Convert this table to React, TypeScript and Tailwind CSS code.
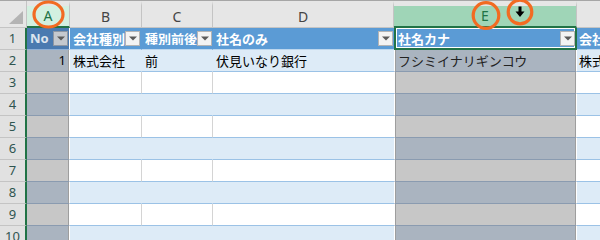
import React from "react";

const Drop = ({ dark = false }: { dark?: boolean }) => (
  <div
    className={
      "ml-auto w-[15px] h-[15px] shrink-0 border flex items-center justify-center " +
      (dark ? "bg-[#c4c8ce] border-[#8d96a3]" : "bg-[#f3f3f3] border-[#b4b4b4]")
    }
  >
    <svg width="8" height="5" viewBox="0 0 8 5">
      <path d="M0 0.5H8L4 4.5Z" fill="#5a5a5a" />
    </svg>
  </div>
);

type RowKind = "white" | "blue";

const rowData: { n: number; kind: RowKind }[] = [
  { n: 3, kind: "white" },
  { n: 4, kind: "blue" },
  { n: 5, kind: "white" },
  { n: 6, kind: "blue" },
  { n: 7, kind: "white" },
  { n: 8, kind: "blue" },
  { n: 9, kind: "white" },
  { n: 10, kind: "blue" },
];

const RowHeader = ({ n }: { n: number }) => (
  <div className="w-[27px] h-[22px] shrink-0 bg-[#e1e1e1] border-b border-b-[#c4c4c4] border-r-2 border-r-[#217346] flex items-center justify-center text-[13px] font-normal text-[#2f5550] leading-none font-['Noto_Sans',sans-serif]">
    {n}
  </div>
);

const DataRow = ({
  n,
  kind,
  b = "",
  c = "",
  d = "",
  e = "",
  f = "",
  a = "",
}: {
  n: number;
  kind: RowKind;
  a?: string;
  b?: string;
  c?: string;
  d?: string;
  e?: string;
  f?: string;
}) => {
  const blue = kind === "blue";
  const bg = blue ? "bg-[#ddebf7]" : "bg-white";
  const vline = blue ? "border-r-transparent" : "border-r-[#d4d4d4]";
  const sel = blue ? "bg-[#aab4c0]" : "bg-[#c7c7c7]";
  return (
    <div className="flex h-[22px] text-[13px] text-black leading-none">
      <RowHeader n={n} />
      <div
        className={
          "w-[43px] shrink-0 border-b border-b-[#8a9bb0] border-r border-r-white shadow-[inset_-1px_0_0_#9e9e9e] flex items-center justify-end pr-[3px] font-['Noto_Sans',sans-serif] " +
          sel
        }
      >
        {a}
      </div>
      <div className={"w-[72px] shrink-0 border-b border-b-[#9bc2e6] border-r flex items-center pl-[3px] whitespace-nowrap overflow-hidden " + bg + " " + vline}>
        {b}
      </div>
      <div className={"w-[71px] shrink-0 border-b border-b-[#9bc2e6] border-r flex items-center pl-[3px] whitespace-nowrap overflow-hidden " + bg + " " + vline}>
        {c}
      </div>
      <div className={"w-[181px] shrink-0 border-b border-b-[#9bc2e6] flex items-center pl-[3px] whitespace-nowrap overflow-hidden " + bg}>
        {d}
      </div>
      <div
        className={
          "w-[183px] shrink-0 border-b border-b-[#8a9bb0] border-x border-x-white shadow-[inset_1px_0_0_#9e9e9e,inset_-1px_0_0_#9e9e9e] flex items-center pl-[3px] whitespace-nowrap overflow-hidden text-[#222] " +
          sel
        }
      >
        {e}
      </div>
      <div className={"flex-1 border-b border-b-[#9bc2e6] flex items-center pl-[2px] whitespace-nowrap overflow-hidden " + bg}>
        {f}
      </div>
    </div>
  );
};

export default function App() {
  return (
    <div className="relative w-[600px] h-[240px] overflow-hidden bg-white font-['Noto_Sans_CJK_JP',sans-serif]">
      {/* column headers */}
      <div className="flex h-[28px] border-t border-t-[#a6a6a6] text-[14px] leading-none font-['Noto_Sans',sans-serif]">
        <div className="w-[27px] h-[27px] shrink-0 bg-[#e6e6e6] border-r border-r-[#c4c4c4] border-b border-b-[#c4c4c4] flex items-end justify-end pr-[3px] pb-[3px]">
          <svg width="14" height="13" viewBox="0 0 14 13">
            <path d="M14 0V13H0Z" fill="#b4b4b4" />
          </svg>
        </div>
        <div className="w-[43px] h-[27px] shrink-0 bg-[#d3f0e0] border-t-[5px] border-t-[#e6e6e6] border-r border-r-[#c4c4c4] border-b-2 border-b-[#217346] flex items-center justify-center text-[#217346]">
          A
        </div>
        <div className="w-[72px] h-[27px] shrink-0 bg-[#e6e6e6] border-t-[5px] border-t-[#e6e6e6] border-r border-r-[#c4c4c4] border-b border-b-[#c4c4c4] flex items-center justify-center text-[#444]">
          B
        </div>
        <div className="w-[71px] h-[27px] shrink-0 bg-[#e6e6e6] border-t-[5px] border-t-[#e6e6e6] border-r border-r-[#c4c4c4] border-b border-b-[#c4c4c4] flex items-center justify-center text-[#444]">
          C
        </div>
        <div className="w-[181px] h-[27px] shrink-0 bg-[#e6e6e6] border-t-[5px] border-t-[#e6e6e6] border-r border-r-[#c4c4c4] border-b border-b-[#c4c4c4] flex items-center justify-center text-[#444]">
          D
        </div>
        <div className="w-[183px] h-[27px] shrink-0 bg-[#9fd5b7] border-t-[5px] border-t-[#e6e6e6] border-r border-r-[#c4c4c4] border-b-2 border-b-[#217346] flex items-center justify-center text-[#217346]">
          E
        </div>
        <div className="flex-1 h-[27px] bg-[#e6e6e6] border-t-[5px] border-t-[#e6e6e6] border-b border-b-[#c4c4c4]"></div>
      </div>

      {/* table header row (row 1) */}
      <div className="flex h-[22px] text-[13px] font-bold leading-none text-white">
        <RowHeader n={1} />
        <div className="w-[43px] shrink-0 bg-[#4a7ab0] border-b border-b-[#8fb0d6] border-r border-r-white flex items-center pl-[3px] pr-[1px] text-[#dde5ee] font-['Noto_Sans',sans-serif]">
          No
          <Drop dark />
        </div>
        <div className="w-[72px] shrink-0 bg-[#5b9bd5] border-b border-b-[#bdd7ee] border-r border-r-transparent flex items-center pl-[3px] pr-[2px] whitespace-nowrap overflow-hidden">
          会社種別
          <Drop />
        </div>
        <div className="w-[71px] shrink-0 bg-[#5b9bd5] border-b border-b-[#bdd7ee] border-r border-r-transparent flex items-center pl-[3px] whitespace-nowrap overflow-hidden">
          <span className="w-[52px] shrink-0 overflow-hidden">種別前後</span>
          <Drop />
        </div>
        <div className="w-[181px] shrink-0 bg-[#5b9bd5] border-b border-b-[#bdd7ee] flex items-center pl-[3px] pr-[1px] whitespace-nowrap overflow-hidden">
          社名のみ
          <Drop />
        </div>
        <div className="w-[183px] shrink-0 bg-[#5b9bd5] border-x-2 border-b-2 border-[#217346] shadow-[inset_0_0_0_1px_#ffffff] flex items-center pl-[2px] whitespace-nowrap overflow-hidden">
          社名カナ
          <Drop />
        </div>
        <div className="flex-1 bg-[#5b9bd5] border-b border-b-[#bdd7ee] flex items-center pl-[2px] whitespace-nowrap overflow-hidden">
          会社
        </div>
      </div>

      <DataRow n={2} kind="blue" a="1" b="株式会社" c="前" d="伏見いなり銀行" e="フシミイナリギンコウ" f="株式" />
      {rowData.map((r) => (
        <DataRow key={r.n} n={r.n} kind={r.kind} />
      ))}

      {/* annotations */}
      <svg className="absolute left-0 top-0 pointer-events-none" width="600" height="40" viewBox="0 0 600 40">
        <ellipse cx="48.5" cy="14.5" rx="14.5" ry="12.5" fill="none" stroke="#f26b22" strokeWidth="3.2" />
        <circle cx="486" cy="15.5" r="12.8" fill="none" stroke="#f26b22" strokeWidth="3.2" />
        <circle cx="520" cy="12" r="11.8" fill="none" stroke="#f26b22" strokeWidth="3.2" />
        <path d="M518.5 6.5H521.5V11.5H524.5L520 17L515.5 11.5H518.5Z" fill="#000" />
      </svg>
    </div>
  );
}
